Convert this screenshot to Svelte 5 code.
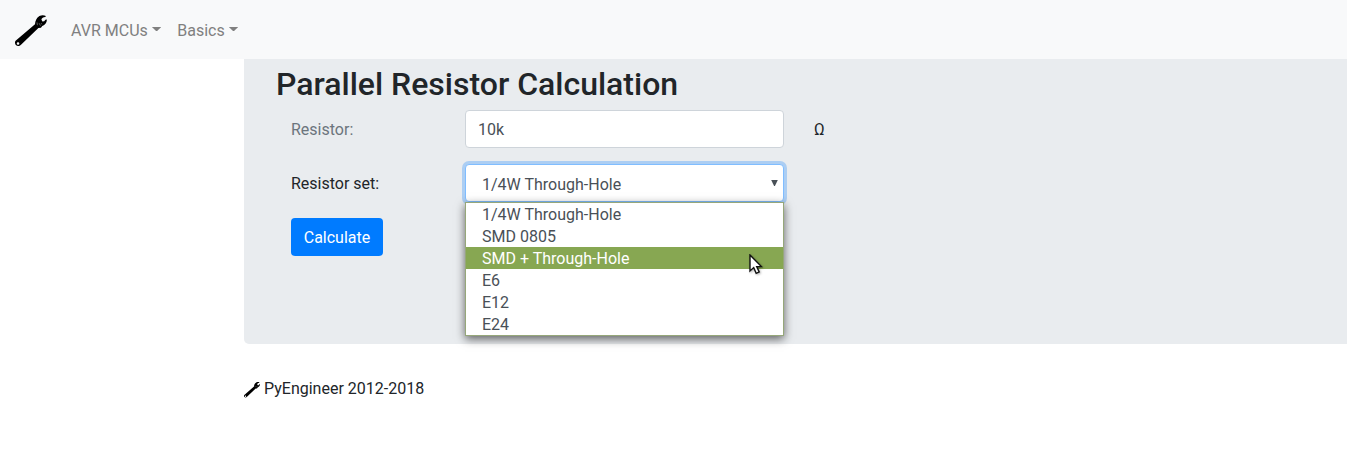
<script>
  const menus = ['AVR MCUs', 'Basics'];
  const sets = ['1/4W Through-Hole', 'SMD 0805', 'SMD + Through-Hole', 'E6', 'E12', 'E24'];
  let resistor = $state('10k');
  let selected = $state(sets[0]);
  let active = $state(2);
</script>

{#snippet wrench(size)}
  <svg class="wrench" width={size} height={size} viewBox="0 0 32 32" aria-hidden="true">
    <path fill-rule="evenodd" d="M.6 25.8 20 9.2C20.2 6.2 21.6 2.4 24.4 1 26.7-.2 29.3 0 30.8 1.1L30.4 2C28.5 1.9 26.8 2.8 26.4 4.4L27.4 6.4 29.2 6.3 30.4 4.7 31.9 4.6C31.8 7.3 30.6 9.3 28.8 10.2L27.2 11 26 12.8 23.4 13 6 29.7C4.3 31.6.5 31.4.1 28.6-.1 27.5 0 26.4.6 25.8ZM3 27.2a1.3 1.3 0 1 0 .1 2.6 1.3 1.3 0 0 0-.1-2.6Z" />
    <path class="glint" d="m22 7.4.4 2.8M24.1 8.2l1.4 2.5M26.2 8.1l.5 1.2" />
  </svg>
{/snippet}

<nav>
  <a class="brand" href="#top" aria-label="PyEngineer">{@render wrench(32)}</a>
  {#each menus as menu}
    <a class="menu" href="#menu">{menu}</a>
  {/each}
</nav>

<main>
  <section>
    <h2>Parallel Resistor Calculation</h2>
    <form onsubmit={(e) => e.preventDefault()}>
      <div class="row">
        <label class="muted" for="resistor">Resistor:</label>
        <input id="resistor" bind:value={resistor} />
        <span class="unit">Ω</span>
      </div>
      <div class="row">
        <span class="label">Resistor set:</span>
        <div class="select">
          <div class="control">
            {selected}
            <svg width="7" height="6" viewBox="0 0 7 6"><path d="M.2 0h6.6L3.9 6h-.8Z" /></svg>
          </div>
          <div class="options" role="listbox">
            {#each sets as item, i}
              <div
                class="option"
                class:active={i === active}
                role="option"
                tabindex="-1"
                aria-selected={item === selected}
                onmouseenter={() => (active = i)}
                onmousedown={() => (selected = item)}
              >{item}</div>
            {/each}
            <svg class="pointer" width="14" height="21" viewBox="0 0 14 21">
              <path d="M1 1v16l3.7-3.4 2.5 5.7 3-1.3-2.5-5.4h4.7Z" />
            </svg>
          </div>
        </div>
      </div>
      <button>Calculate</button>
    </form>
  </section>
  <footer>{@render wrench(16)} <span>PyEngineer 2012-2018</span></footer>
</main>

<style>
  :global(body) {
    overflow: hidden;
    background: #fff;
    color: #212529;
    font: 400 16px/24px Roboto, sans-serif;
  }
  nav, main, nav *, main * { box-sizing: border-box; }
  nav {
    display: flex;
    align-items: center;
    height: 59px;
    padding: 0 15px;
    background: #f8f9fa;
  }
  .brand { display: flex; margin: 3px 16px 0 0; color: #000; }
  .wrench { display: block; flex: none; fill: #000; }
  .glint { fill: none; stroke: #999; stroke-width: .6; }
  .menu {
    padding: 2px 8px 0;
    color: #808080;
    text-decoration: none;
    white-space: nowrap;
  }
  .menu::after {
    content: '';
    display: inline-block;
    width: 9.4px;
    height: 4.4px;
    margin-left: 4.1px;
    vertical-align: 4.1px;
    background: currentColor;
    clip-path: polygon(0 0, 100% 0, 50% 100%);
  }
  main { width: 1140px; margin-left: 244px; }
  section {
    height: 285px;
    padding: 6px 32px 0;
    background: #e9ecef;
    border-radius: 0 0 5px 5px;
  }
  h2 { margin: 0 0 7px; font-size: 32px; line-height: 38px; font-weight: 500; }
  form { padding-left: 15px; }
  .row { display: flex; height: 38px; margin-bottom: 16px; }
  .row label, .label { width: 174px; padding-top: 8px; }
  .muted { color: #6c757d; }
  input, .control {
    width: 319px;
    height: 38px;
    padding: 6px 12px;
    border: 1px solid #ced4da;
    border-radius: 4px;
    background: #fff;
    color: #495057;
    font: inherit;
    outline: 0;
  }
  .unit { padding: 8px 0 0 30px; }
  .select { position: relative; width: 319px; }
  .control {
    display: flex;
    align-items: center;
    justify-content: space-between;
    padding: 8px 5px 4px 16px;
    border-color: #80bdff;
    box-shadow: 0 0 0 3px #accef3;
  }
  .control svg { margin-top: -5px; fill: #495057; }
  .options {
    position: absolute;
    z-index: 1;
    top: 38px;
    left: 0;
    width: 319px;
    border: 1px solid #96a77a;
    background: #fff;
    box-shadow: 0 3px 9px rgba(0, 0, 0, .6);
  }
  .option { height: 22px; padding-left: 16px; color: #495057; line-height: 23px; }
  .active { background: #87a752; color: #fff; }
  .pointer { position: absolute; top: 51px; left: 283px; pointer-events: none; filter: drop-shadow(1px 1px 1px rgba(0, 0, 0, .3)); }
  .pointer path { fill: #fff; stroke: #111; stroke-width: 1.4; }
  button {
    display: block;
    width: 92px;
    height: 38px;
    padding: 1px 0 0;
    border: 0;
    border-radius: 4px;
    background: #007bff;
    color: #fff;
    font: inherit;
  }
  footer { display: flex; align-items: center; gap: 4px; padding-top: 33px; }
  footer .wrench { margin-top: 1px; }
</style>
